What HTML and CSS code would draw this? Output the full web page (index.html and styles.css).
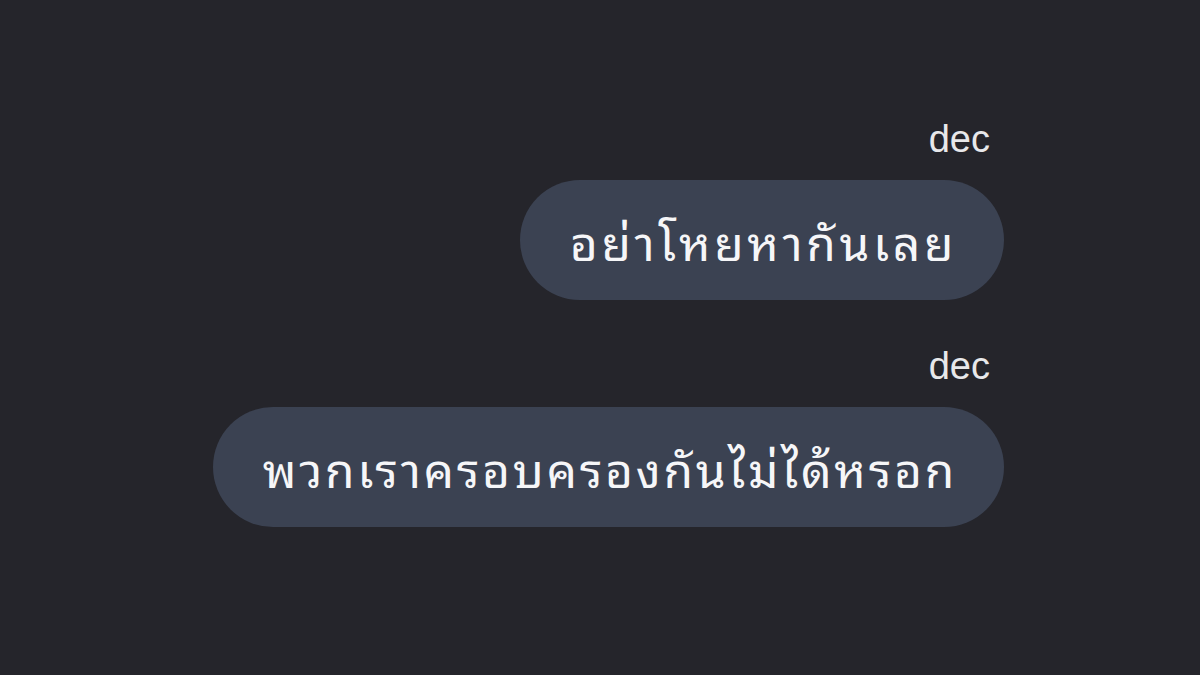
FILE: index.html
```html
<!DOCTYPE html>
<html lang="th">
<head>
<meta charset="utf-8">
<link rel="stylesheet" href="styles.css">
</head>
<body>
<div class="chat">
  <div class="msg">
    <div class="name">dec</div>
    <div class="bubble short">อย่าโหยหากันเลย</div>
  </div>
  <div class="msg">
    <div class="name">dec</div>
    <div class="bubble long">พวกเราครอบครองกันไม่ได้หรอก</div>
  </div>
</div>
</body>
</html>
```
FILE: styles.css
```css
html, body {
  margin: 0;
  padding: 0;
  width: 1200px;
  height: 675px;
  background: #25252b;
  overflow: hidden;
}
.chat {
  display: flex;
  flex-direction: column;
  align-items: flex-end;
  padding: 115px 196px 0 0;
  gap: 42px;
}
.msg {
  display: flex;
  flex-direction: column;
  align-items: flex-end;
}
.name {
  font-family: "Liberation Sans", Arial, sans-serif;
  font-size: 38px;
  line-height: 48px;
  color: #e8e8ea;
  margin-right: 14px;
  margin-bottom: 17px;
}
.bubble {
  background: #3b4252;
  color: #f6f6f8;
  font-family: "Noto Sans Thai Looped", "Noto Sans Thai", sans-serif;
  font-size: 48px;
  height: 120px;
  line-height: 120px;
  padding: 0 47px 0 50px;
  border-radius: 60px;
  box-sizing: border-box;
  white-space: nowrap;
}
.bubble.short { letter-spacing: 3.6px; }
.bubble.long { letter-spacing: 2.7px; }
```
